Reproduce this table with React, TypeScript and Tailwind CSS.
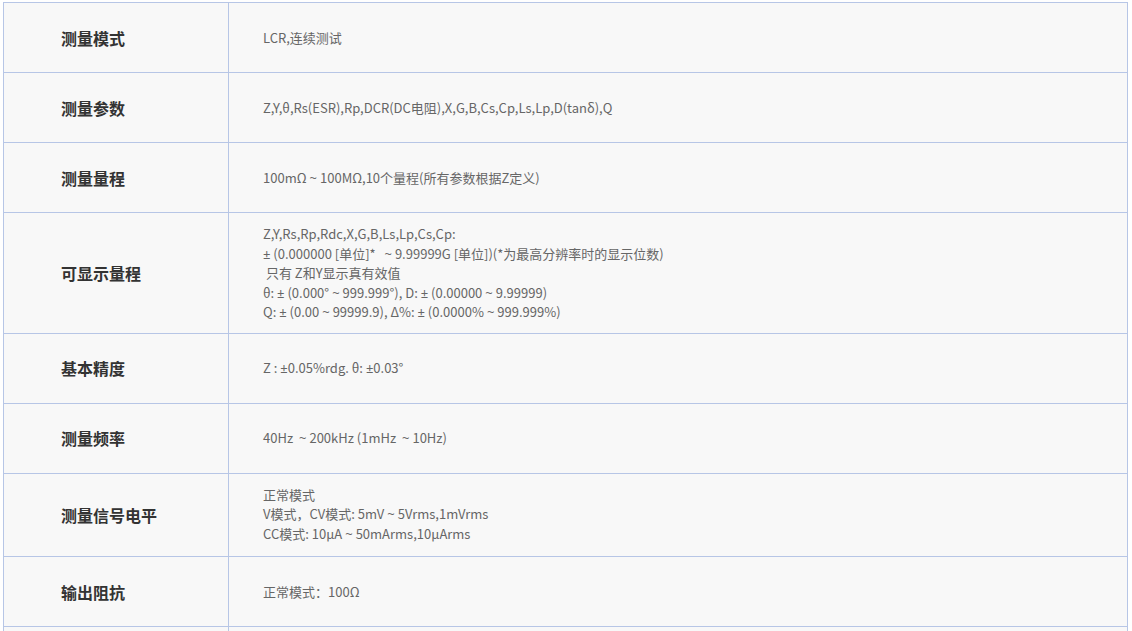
const rows: { label: string; lines: string[]; tall?: boolean }[] = [
  { label: '测量模式', lines: ['LCR,连续测试'] },
  { label: '测量参数', lines: ['Z,Y,θ,Rs(ESR),Rp,DCR(DC电阻),X,G,B,Cs,Cp,Ls,Lp,D(tanδ),Q'] },
  { label: '测量量程', lines: ['100mΩ～100MΩ,10个量程(所有参数根据Z定义)'] },
  {
    label: '可显示量程',
    lines: [
      'Z,Y,Rs,Rp,Rdc,X,G,B,Ls,Lp,Cs,Cp:',
      '± (0.000000 [单位]*  ～9.99999G [单位])(*为最高分辨率时的显示位数)',
      '\u00a0只有 Z和Y显示真有效值',
      'θ: ± (0.000°～999.999°), D: ± (0.00000～9.99999)',
      'Q: ± (0.00～99999.9), Δ%: ± (0.0000%～999.999%)',
    ],
  },
  { label: '基本精度', lines: ['Z : ±0.05%rdg. θ: ±0.03°'] },
  { label: '测量频率', lines: ['40Hz ～200kHz (1mHz ～10Hz)'] },
  {
    label: '测量信号电平',
    lines: ['正常模式', 'V模式，CV模式: 5mV～5Vrms,1mVrms', 'CC模式: 10μA～50mArms,10μArms'],
    tall: true,
  },
  { label: '输出阻抗', lines: ['正常模式：100Ω'] },
  { label: '', lines: [''] },
];

// ± and ～ are full width in the CJK font; draw them narrow
const Line = ({ text }: { text: string }) => (
  <>
    {text.split(/([±～])/).map((part, k) =>
      part === '±' ? (
        <span key={k} className="font-['Noto_Sans',sans-serif] leading-[0]">±</span>
      ) : part === '～' ? (
        <span key={k} className="font-['Noto_Sans',sans-serif] leading-[0] mx-[3px]">~</span>
      ) : (
        part
      )
    )}
  </>
);

export default function App() {
  return (
    <div className="min-h-screen bg-white pt-[2px] pl-[3px] font-['Noto_Sans_CJK_SC','Noto_Sans',sans-serif]">
      <table className="w-[1125px] border-collapse bg-[#f8f8f8]">
        <tbody>
          {rows.map((r, i) => (
            <tr key={i}>
              <td className="w-[225px] h-[70px] border border-[#b7c6e6] pl-[57px] align-middle text-[16px] font-bold text-[#333]">
                {r.label}
              </td>
              <td
                className={
                  r.tall
                    ? 'border border-[#b7c6e6] pl-[34px] pt-[11px] pb-[13px] align-middle text-[13px] leading-[19.5px] text-[#666]'
                    : 'border border-[#b7c6e6] pl-[34px] py-[11px] align-middle text-[13px] leading-[19.5px] text-[#666]'
                }
              >
                {r.lines.map((l, j) => (
                  <div key={j} className="h-[19.5px] whitespace-pre">
                    <Line text={l} />
                  </div>
                ))}
              </td>
            </tr>
          ))}
        </tbody>
      </table>
    </div>
  );
}
